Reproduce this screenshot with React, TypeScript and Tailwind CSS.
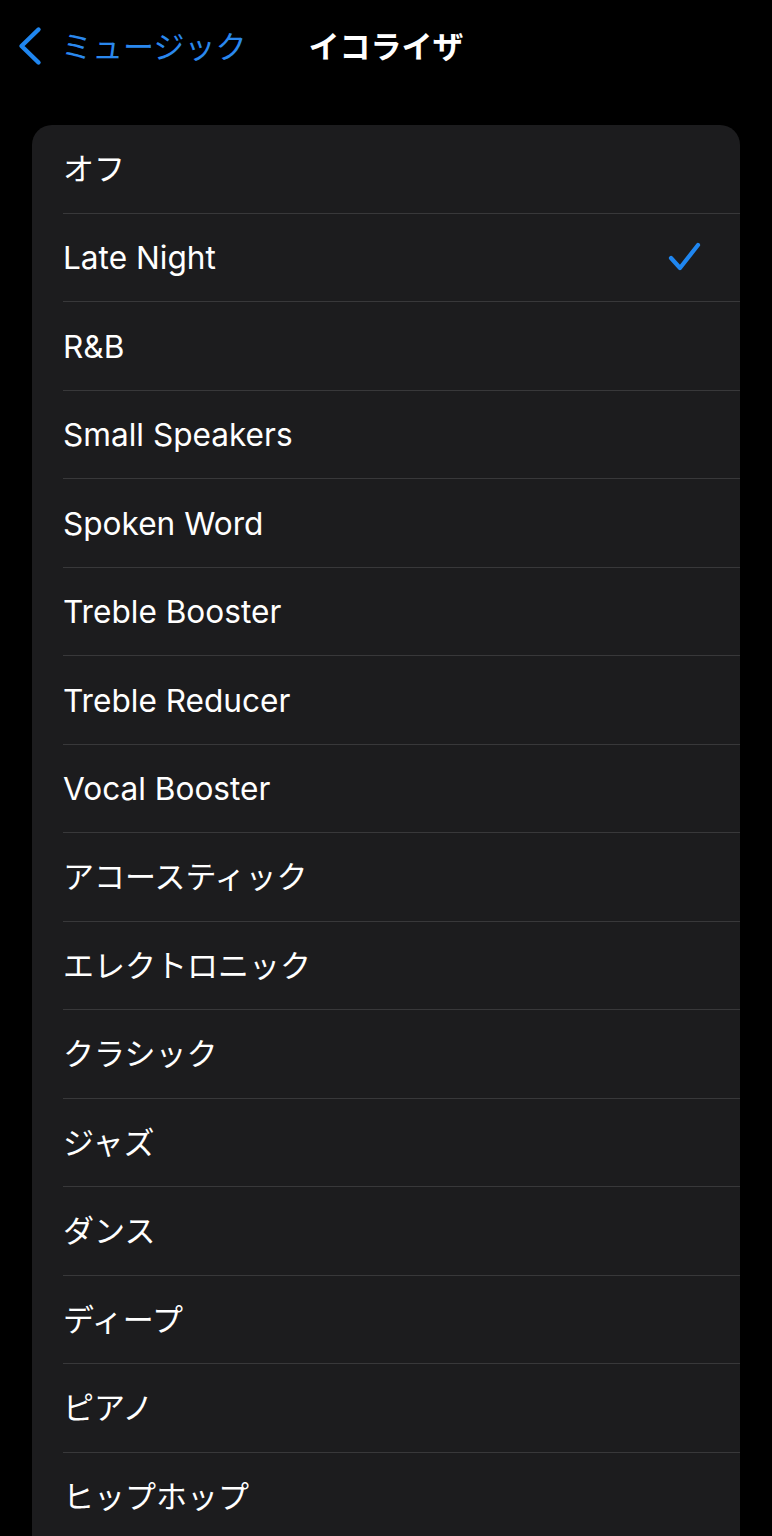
import React from "react";

const items = [
  "オフ",
  "Late Night",
  "R&B",
  "Small Speakers",
  "Spoken Word",
  "Treble Booster",
  "Treble Reducer",
  "Vocal Booster",
  "アコースティック",
  "エレクトロニック",
  "クラシック",
  "ジャズ",
  "ダンス",
  "ディープ",
  "ピアノ",
  "ヒップホップ",
];

const isLatin = (t: string) => /^[A-Za-z&\s]+$/.test(t);

export default function App() {
  return (
    <div
      className="h-[1536px] w-[772px] overflow-hidden bg-black text-white"
      style={{ fontFamily: 'Inter, "Noto Sans CJK JP", sans-serif' }}
    >
      <div className="grid h-[92px] grid-cols-[1fr_auto_1fr] items-center">
        <div className="flex items-center pl-[16px]">
          <svg width="28" height="40" viewBox="0 0 28 40" fill="none">
            <path
              d="M22.5 3.5 L5.5 20 L22.5 36.5"
              stroke="#1f86f0"
              strokeWidth="4.4"
              strokeLinecap="round"
              strokeLinejoin="round"
            />
          </svg>
          <span className="ml-[17px] text-[31px] leading-none text-[#2a88ee]">
            ミュージック
          </span>
        </div>
        <div className="text-[31px] font-bold leading-none">イコライザ</div>
        <div />
      </div>
      <div className="mx-[32px] mt-[33px] overflow-hidden rounded-[20px] bg-[#1c1c1e] pb-[60px]">
        {items.map((t, i) => (
          <div key={t} className="flex h-[88.5px] pl-[31px]">
            <div
              className={
                "flex flex-1 items-center pr-[38px] " +
                (i < items.length - 1 ? "border-b border-[#38383a]" : "")
              }
            >
              <span
                className={
                  "flex-1 leading-none text-white " +
                  (isLatin(t) ? "text-[31.6px] pt-[2px]" : "text-[31px]")
                }
              >
                {t}
              </span>
              {t === "Late Night" && (
                <svg width="34" height="32" viewBox="0 0 34 32" fill="none">
                  <path
                    d="M3 17 L12 27 L30 4"
                    stroke="#1f86f0"
                    strokeWidth="4.2"
                    strokeLinecap="round"
                    strokeLinejoin="round"
                  />
                </svg>
              )}
            </div>
          </div>
        ))}
      </div>
    </div>
  );
}
